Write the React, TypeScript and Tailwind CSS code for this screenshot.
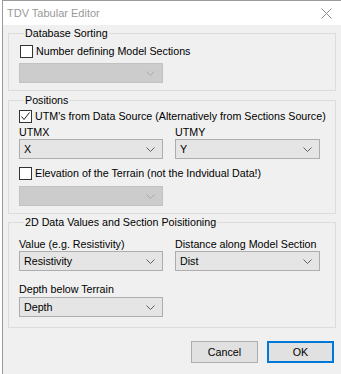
import React from "react";

const FONT = "font-['Liberation_Sans',Arial,sans-serif]";

function Chevron({ disabled }: { disabled?: boolean }) {
  return (
    <svg width="9" height="5" viewBox="0 0 9 5" fill="none">
      <polyline
        points="0.5,0.5 4.5,4.5 8.5,0.5"
        stroke={disabled ? "#a8a8a8" : "#606060"}
        strokeWidth="1"
      />
    </svg>
  );
}

function Combo({ value, disabled, wide }: { value?: string; disabled?: boolean; wide?: boolean }) {
  return (
    <div
      className={`flex h-[20px] items-center justify-between border pl-[4px] pr-[7px] ${wide ? "w-[145px]" : "w-[144px]"} ${
        disabled ? "border-[#c2c2c2] bg-[#cccccc]" : "border-[#adadad] bg-[#e5e5e5]"
      }`}
    >
      <span className="text-black">{value}</span>
      <Chevron disabled={disabled} />
    </div>
  );
}

function Check({ checked, label }: { checked?: boolean; label: string }) {
  return (
    <div className="flex h-[14px] items-center gap-[3px]">
      <div className="flex h-[13px] w-[13px] items-center justify-center border border-[#333333] bg-white">
        {checked && (
          <svg width="11" height="11" viewBox="0 0 11 11" fill="none">
            <polyline points="1.5,5.5 4,8.5 9.5,1.5" stroke="#222" strokeWidth="1" />
          </svg>
        )}
      </div>
      <span>{label}</span>
    </div>
  );
}

function Group({ title, className, children }: { title: string; className?: string; children: React.ReactNode }) {
  return (
    <fieldset className={`border border-[#dcdcdc] pl-[10px] ${className ?? ""}`}>
      <legend className="ml-[5px] px-[1px] leading-[14px]">{title}</legend>
      {children}
    </fieldset>
  );
}

export default function App() {
  return (
    <div className={`h-[374px] w-[341px] overflow-hidden bg-white pl-[2px] text-[10.7px] text-black ${FONT}`}>
      <div className="flex h-full flex-col border-l border-t border-[#9a9a9a] bg-[#f0f0f0]">
        <div className="flex h-[24px] items-center justify-between bg-white pl-[4px] pr-[9px]">
          <span className="text-[11px] text-[#999999]">TDV Tabular Editor</span>
          <svg width="11" height="11" viewBox="0 0 11 11" fill="none">
            <path d="M0.5 0.5 L10.5 10.5 M10.5 0.5 L0.5 10.5" stroke="#8a8a8a" strokeWidth="1" />
          </svg>
        </div>

        <div className="flex flex-col px-[5px] pt-[1px]">
          <Group title="Database Sorting" className="pb-[7px]">
            <div className="mt-[4px] pl-[1px]">
              <Check label="Number defining Model Sections" />
            </div>
            <div className="mt-[5px]">
              <Combo disabled />
            </div>
          </Group>

          <Group title="Positions" className="mt-[2px] pb-[7px]">
            <div className="mt-[2px]">
              <Check checked label="UTM's from Data Source (Alternatively from Sections Source)" />
            </div>
            <div className="mt-[2px] flex gap-[12px]">
              <div className="flex flex-col">
                <span className="h-[14px] leading-[14px]">UTMX</span>
                <Combo value="X" />
              </div>
              <div className="flex flex-col">
                <span className="h-[14px] leading-[14px]">UTMY</span>
                <Combo value="Y" wide />
              </div>
            </div>
            <div className="mt-[7px]">
              <Check label="Elevation of the Terrain (not the Indvidual Data!)" />
            </div>
            <div className="mt-[6px]">
              <Combo disabled />
            </div>
          </Group>

          <Group title="2D Data Values and Section Poisitioning" className="mt-[1px] pb-[10px]">
            <div className="mt-[8px] flex gap-[12px]">
              <div className="flex flex-col">
                <span className="h-[14px] leading-[14px]">Value (e.g. Resistivity)</span>
                <Combo value="Resistivity" />
              </div>
              <div className="flex flex-col">
                <span className="h-[14px] leading-[14px]">Distance along Model Section</span>
                <Combo value="Dist" wide />
              </div>
            </div>
            <div className="mt-[11px] flex flex-col">
              <span className="h-[14px] leading-[14px]">Depth below Terrain</span>
              <div className="mt-[1px]">
                <Combo value="Depth" />
              </div>
            </div>
          </Group>

          <div className="mr-[2px] mt-[13px] flex justify-end gap-[9px]">
            <button className="h-[22px] w-[67px] border border-[#adadad] bg-[#e1e1e1]">Cancel</button>
            <button className="h-[22px] w-[67px] border-2 border-[#0078d7] bg-[#e1e1e1]">OK</button>
          </div>
        </div>
      </div>
    </div>
  );
}
